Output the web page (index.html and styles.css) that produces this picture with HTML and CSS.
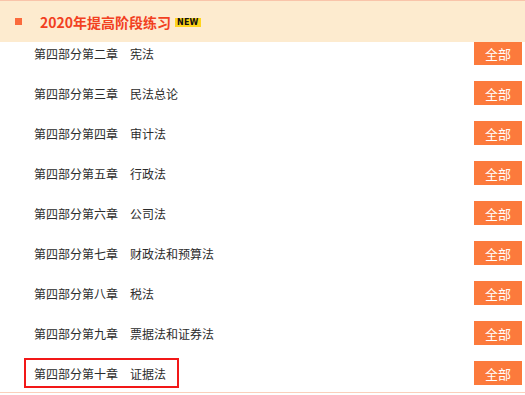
FILE: index.html
```html
<!DOCTYPE html>
<html lang="zh-CN">
<head>
<meta charset="utf-8">
<title>2020年提高阶段练习</title>
<link rel="stylesheet" href="styles.css">
</head>
<body>
<div class="panel">
  <div class="header">
    <span class="bullet"></span>
    <span class="title">2020年提高阶段练习</span>
    <span class="badge">NEW</span>
  </div>
  <ul class="list">
    <li class="row"><a class="link">第四部分第二章　宪法</a><span class="btn">全部</span></li>
    <li class="row"><a class="link">第四部分第三章　民法总论</a><span class="btn">全部</span></li>
    <li class="row"><a class="link">第四部分第四章　审计法</a><span class="btn">全部</span></li>
    <li class="row"><a class="link">第四部分第五章　行政法</a><span class="btn">全部</span></li>
    <li class="row"><a class="link">第四部分第六章　公司法</a><span class="btn">全部</span></li>
    <li class="row"><a class="link">第四部分第七章　财政法和预算法</a><span class="btn">全部</span></li>
    <li class="row"><a class="link">第四部分第八章　税法</a><span class="btn">全部</span></li>
    <li class="row"><a class="link">第四部分第九章　票据法和证券法</a><span class="btn">全部</span></li>
    <li class="row"><a class="link active">第四部分第十章　证据法</a><span class="btn">全部</span></li>
  </ul>
</div>
</body>
</html>
```
FILE: styles.css
```css
* { box-sizing: border-box; }
html, body {
  margin: 0;
  padding: 0;
  background: #fff;
}
body {
  width: 525px;
  font-family: "Noto Sans CJK SC", "Noto Sans", sans-serif;
  color: #333;
}
.panel {
  border-bottom: 1px solid #fbcfbb;
  padding-bottom: 4px;
}
.header {
  position: relative;
  z-index: 1;
  height: 42px;
  border-top: 1px solid #f9c4aa;
  background: #fdebcf;
  display: flex;
  align-items: center;
  padding-left: 15px;
}
.bullet {
  width: 7px;
  height: 7px;
  background: #fb6a3c;
  margin-right: 18px;
}
.title {
  font-size: 14px;
  font-weight: bold;
  color: #f2401f;
  line-height: 20px;
}
.badge {
  margin-left: 4px;
  margin-top: 1px;
  background: #ffd51c;
  color: #111;
  font-family: "DejaVu Sans", sans-serif;
  font-weight: bold;
  font-size: 8px;
  line-height: 9px;
  height: 9px;
  padding: 0 2px;
  letter-spacing: 0.2px;
}
.list {
  list-style: none;
  margin: -4px 0 0 0;
  padding: 0;
  display: flex;
  flex-direction: column;
  gap: 10px;
}
.row {
  height: 30px;
  display: flex;
  align-items: center;
  justify-content: space-between;
  padding: 0 3px 0 24px;
}
.link {
  height: 30px;
  display: flex;
  align-items: center;
  padding: 0 11px 0 8px;
  border: 2px solid transparent;
  font-size: 12px;
  color: #2b2b2b;
  text-decoration: none;
}
.link.active {
  border-color: #f21818;
}
.btn {
  width: 48px;
  height: 24px;
  background: #fc7a3c;
  color: #fff;
  font-size: 13px;
  display: flex;
  align-items: center;
  justify-content: center;
}
```
